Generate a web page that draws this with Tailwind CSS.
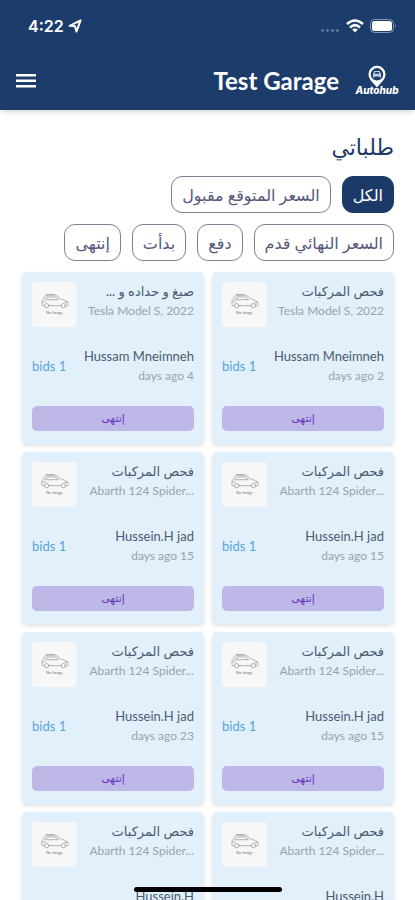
<!DOCTYPE html>
<html lang="ar" dir="rtl">
<head>
  <meta charset="UTF-8" />
  <meta name="viewport" content="width=device-width, initial-scale=1" />
  <title>Autohub - Test Garage</title>
  <script src="https://cdn.jsdelivr.net/npm/@tailwindcss/browser@4"></script>
</head>
<body class="flex h-screen flex-col overflow-hidden bg-white font-['Lato','DejaVu_Sans',sans-serif] text-[#1c3a68]">

  <!-- line art used by every card without a photo -->
  <svg class="hidden" aria-hidden="true">
    <symbol id="car" viewBox="0 0 30 16">
      <g fill="none" stroke="#a3a3a3" stroke-width="0.9" stroke-linecap="round" stroke-linejoin="round">
        <path d="M3.5 13 H2 Q1 13 1 11.5 V8.5 Q1 7.2 2.2 6.8 L4 3 Q4.6 1.8 6 1.8 H14.5 Q16 1.8 17.2 2.6 L22 6.2 L26.5 7.6 Q29 8.4 29 10.6 V12 Q29 13 28 13 H26.5" />
        <path d="M8.5 13 H21.5" />
        <path d="M5 6.3 L6.3 3.6 H14.5 Q15.5 3.6 16.3 4.3 L18.5 6.3 Z" />
        <path d="M6 1 H14 M2 9 H4.5 M25.5 9.6 H28.4" />
        <circle cx="6" cy="13" r="2.3" />
        <circle cx="24" cy="13" r="2.3" />
      </g>
    </symbol>
  </svg>

  <header class="relative z-10 bg-[#1c3d6b] text-white shadow-md">
    <!-- Status bar -->
    <div dir="ltr" class="flex h-[52px] items-center justify-between pr-[18px] pl-7">
      <div class="flex items-center gap-1 font-['Inter',sans-serif] text-base font-semibold">
        <span>4:22</span>
        <svg class="size-3.5" viewBox="0 0 14 14" fill="none" stroke="currentColor" stroke-width="2" stroke-linejoin="round"><path d="M12.6 1.4 L1.6 6.8 L7 7.2 L8.4 12.6 Z" /></svg>
      </div>
      <div class="flex items-center gap-1.5">
        <svg class="h-4 w-5" viewBox="0 0 20 16" fill="#6f86a8"><circle cx="2.5" cy="12.5" r="1.3" /><circle cx="7.5" cy="12.5" r="1.3" /><circle cx="12.5" cy="12.5" r="1.3" /><circle cx="17.5" cy="12.5" r="1.3" /></svg>
        <svg class="h-3.5 w-[18px]" viewBox="0 0 18 14" fill="none" stroke="currentColor" stroke-width="2.6"><path d="M1 5 Q9 -2 17 5" /><path d="M4 8.4 Q9 4 14 8.4" /><path d="M9 13.4 L6.2 10.4 Q9 8.4 11.8 10.4 Z" fill="currentColor" stroke="none" /></svg>
        <svg class="h-3.5 w-[27px]" viewBox="0 0 27 14"><rect x="0.5" y="0.5" width="23" height="13" rx="4" fill="none" stroke="#8497b3" /><rect x="2" y="2" width="20" height="10" rx="2.5" fill="#fff" /><path d="M25 4.8 Q26.6 7 25 9.2 Z" fill="#8497b3" /></svg>
      </div>
    </div>

    <!-- App bar -->
    <div class="flex h-[58px] items-center gap-4 px-4">
      <a href="#" aria-label="Autohub" class="block">
        <svg class="h-8 w-11" viewBox="0 0 44 32">
          <path d="M22 22.5 C18 17.5 13.5 14.5 13.5 9.3 A8.5 8.5 0 0 1 30.5 9.3 C30.5 14.5 26 17.5 22 22.5 Z" fill="#fff" />
          <circle cx="22" cy="9.3" r="6.2" fill="#1c3d6b" />
          <path d="M18 9 L19.3 6 H24.7 L26 9 V12.6 H24.6 V11.6 H19.4 V12.6 H18 Z" fill="#c7d1df" />
          <path d="M19.4 8.7 L20.1 7 H23.9 L24.6 8.7 Z" fill="#1c3d6b" />
          <text x="22" y="29" text-anchor="middle" font-family="Inter" font-size="10" font-weight="800" font-style="italic" fill="#fff">Autohub</text>
        </svg>
      </a>
      <h1 dir="ltr" class="text-2xl font-bold">Test Garage</h1>
      <button type="button" aria-label="Menu" class="ms-auto">
        <svg class="h-4 w-5" viewBox="0 0 20 16" fill="currentColor"><rect y="1" width="20" height="2.5" /><rect y="6.5" width="20" height="2.5" /><rect y="12" width="20" height="2.5" /></svg>
      </button>
    </div>
  </header>

  <main class="flex-1 overflow-y-auto pt-5 pr-[21px] pl-[22px] [scrollbar-width:none]">
    <h2 class="mb-3 text-[22px] leading-[34px]">طلباتي</h2>

    <!-- Filters -->
    <div class="mb-[11px] flex flex-col gap-[11px] text-base text-[#55587a]">
      <div class="flex gap-[11px]">
        <button type="button" class="h-[37px] rounded-[11px] border border-[#1c3a68] bg-[#1c3a68] px-[10px] text-white">الكل</button>
        <button type="button" class="h-[37px] rounded-[11px] border border-[#7f8095] px-[10px]">السعر المتوقع مقبول</button>
      </div>
      <div class="flex gap-[11px]">
        <button type="button" class="h-[37px] rounded-[11px] border border-[#7f8095] px-[10px]">السعر النهائي قدم</button>
        <button type="button" class="h-[37px] rounded-[11px] border border-[#7f8095] px-[10px]">دفع</button>
        <button type="button" class="h-[37px] rounded-[11px] border border-[#7f8095] px-[10px]">بدأت</button>
        <button type="button" class="h-[37px] rounded-[11px] border border-[#7f8095] px-[10px]">إنتهى</button>
      </div>
    </div>

    <!-- Orders -->
    <section id="orders" class="grid grid-cols-2 gap-2 pb-10"></section>
  </main>

  <div class="fixed inset-x-0 bottom-2 z-20 mx-auto h-[5px] w-[148px] rounded-full bg-black"></div>

  <script>
    const orders = [
      { service: 'فحص المركبات', car: 'Tesla Model S, 2022', owner: 'Hussam Mneimneh', days: 2 },
      { service: 'صبغ و حداده و ...', car: 'Tesla Model S, 2022', owner: 'Hussam Mneimneh', days: 4 },
      { service: 'فحص المركبات', car: 'Abarth 124 Spider...', owner: 'Hussein.H jad', days: 15 },
      { service: 'فحص المركبات', car: 'Abarth 124 Spider...', owner: 'Hussein.H jad', days: 15 },
      { service: 'فحص المركبات', car: 'Abarth 124 Spider...', owner: 'Hussein.H jad', days: 15 },
      { service: 'فحص المركبات', car: 'Abarth 124 Spider...', owner: 'Hussein.H jad', days: 23 },
      { service: 'فحص المركبات', car: 'Abarth 124 Spider...', owner: 'Hussein.H', days: 23 },
      { service: 'فحص المركبات', car: 'Abarth 124 Spider...', owner: 'Hussein.H', days: 23 },
    ];

    document.getElementById('orders').innerHTML = orders.map(order => `
      <article class="rounded-[5px] bg-[#e1f0fa] px-[10px] pt-[10px] pb-[13px] shadow-[0_2px_4px_rgba(0,0,0,0.12)]">
        <div class="flex justify-between">
          <div class="whitespace-nowrap">
            <h3 class="text-[13px] leading-[19px] text-[#4c5a70]">${order.service}</h3>
            <p dir="ltr" class="text-right text-xs leading-[19px] text-[#98a3af]">${order.car}</p>
          </div>
          <div class="flex size-[45px] shrink-0 flex-col items-center justify-center rounded bg-[#f7f7f7]">
            <svg class="h-4 w-7"><use href="#car" /></svg>
            <span class="text-[4px] leading-[7px] text-[#777777]">No Image</span>
          </div>
        </div>
        <div class="mt-5 flex items-center justify-between whitespace-nowrap">
          <div>
            <p class="text-[13px] leading-[19px] text-[#4c5a70]">${order.owner}</p>
            <p class="text-xs leading-5 text-[#98a3af]">${order.days} days ago</p>
          </div>
          <p class="text-[13px] text-[#57a5dc]">1 bids</p>
        </div>
        <button type="button" class="mt-5 block h-[25px] w-full rounded-[5px] bg-[#bdb8e8] text-[11px] text-[#6a35bd]">إنتهى</button>
      </article>`).join('');
  </script>
</body>
</html>
